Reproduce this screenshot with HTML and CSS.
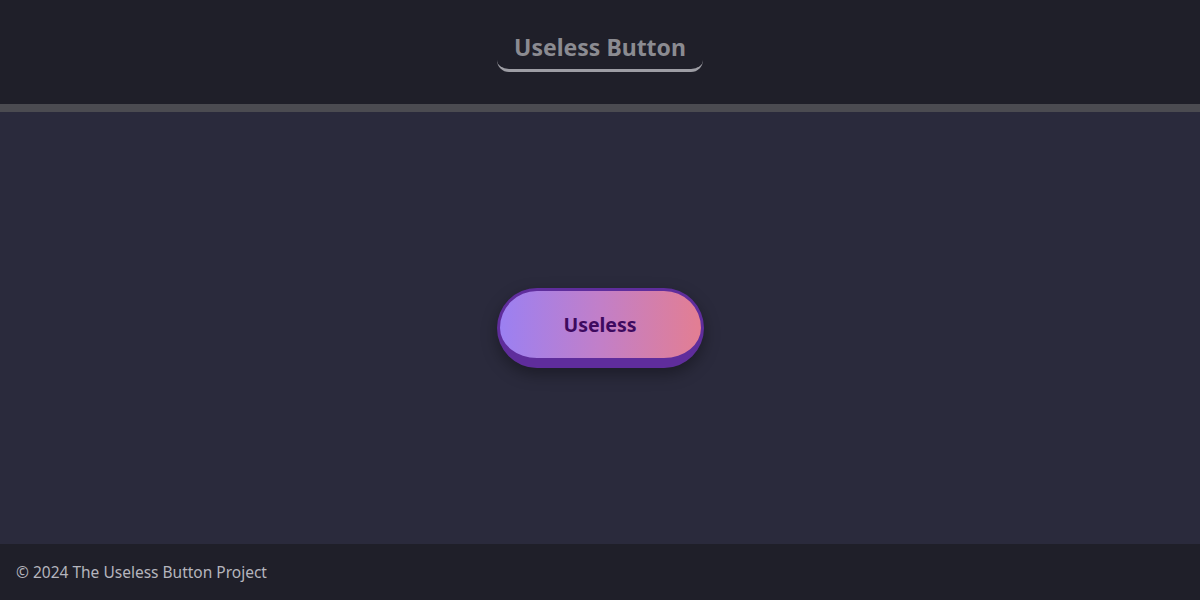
FILE: index.html
```html
<!DOCTYPE html>
<html lang="en">
<head>
<meta charset="utf-8">
<title>Useless Button</title>
<link rel="stylesheet" href="styles.css">
</head>
<body>
<header class="site-header">
  <h1 class="title">Useless Button</h1>
</header>
<div class="divider"></div>
<main class="stage">
  <button class="useless-btn" type="button">Useless</button>
</main>
<footer class="site-footer">
  <p class="copy">© 2024 The Useless Button Project</p>
</footer>
</body>
</html>
```

FILE: styles.css
```css
* { box-sizing: border-box; }
html, body { margin: 0; padding: 0; height: 100%; }
body {
  display: flex;
  flex-direction: column;
  font-family: "Noto Sans", "Open Sans", sans-serif;
  background: #2a2a3c;
}
.site-header {
  height: 104px;
  background: #1f1f29;
  display: flex;
  justify-content: center;
  padding-top: 28px;
}
.title {
  margin: 0;
  height: 44px;
  width: 206px;
  text-align: center;
  padding: 0;
  font-size: 23px;
  font-weight: 700;
  line-height: 38px;
  color: #8b8b91;
  border-bottom: 3px solid #9d9da4;
  border-radius: 0 0 12px 12px;
}
.divider {
  height: 8px;
  background: #4b4b51;
}
.stage {
  flex: 1;
  display: flex;
  align-items: center;
  justify-content: center;
  background: #2a2a3c;
}
.useless-btn {
  width: 207px;
  height: 80px;
  border: 3px solid #5f2d9c;
  border-bottom-width: 10px;
  border-radius: 40px;
  background: linear-gradient(90deg, #9b80f2 0%, #c27fc8 50%, #e37e92 100%);
  color: #3e0a5f;
  font-family: "Noto Sans", "Open Sans", sans-serif;
  font-size: 19.5px;
  font-weight: 700;
  box-shadow: 0 6px 16px rgba(0, 0, 0, 0.35);
  cursor: pointer;
  padding: 0;
}
.site-footer {
  height: 56px;
  background: #1f1f29;
  display: flex;
  align-items: center;
  padding: 0 16px;
}
.copy {
  margin: 0;
  font-size: 15.5px;
  color: #b5b5bd;
}
```
